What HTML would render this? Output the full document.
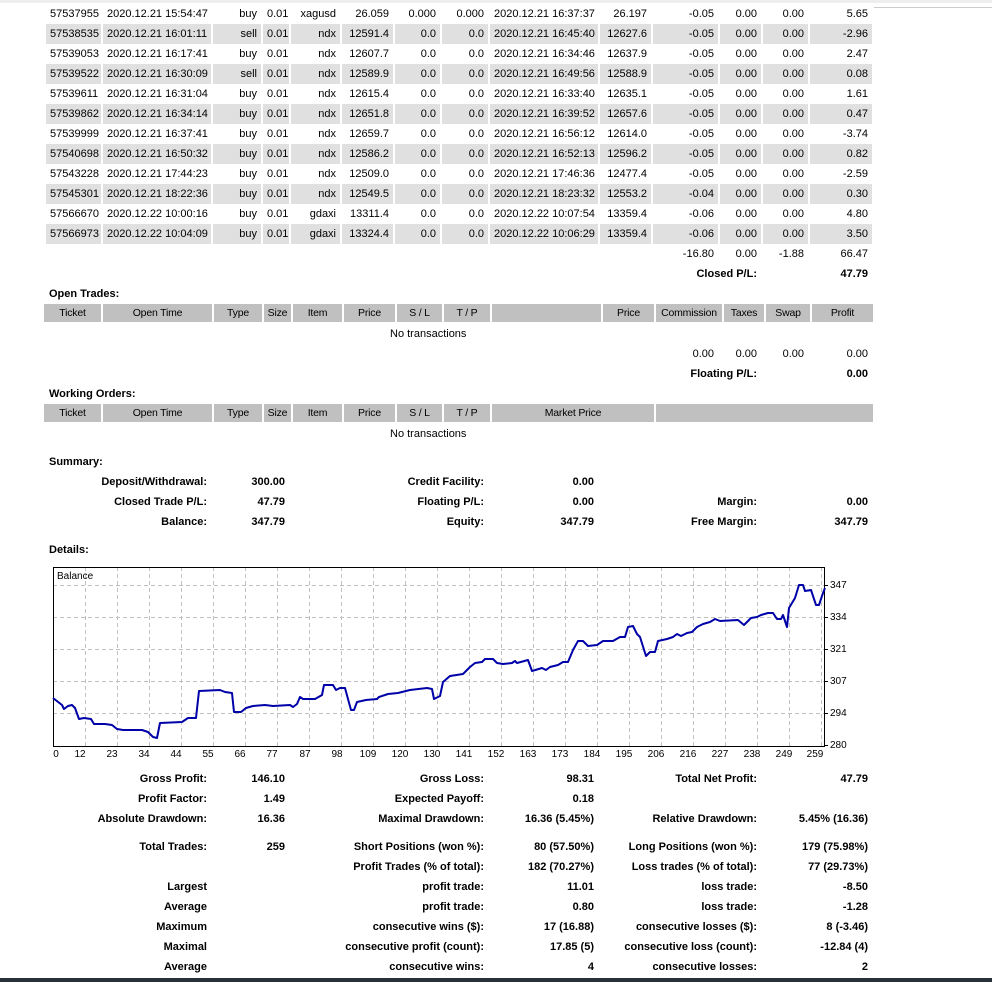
<!DOCTYPE html>
<html><head><meta charset="utf-8"><style>
*{margin:0;padding:0;box-sizing:border-box}
body{width:992px;height:982px;background:#fff;position:relative;overflow:hidden;font-family:"Liberation Sans","DejaVu Sans",sans-serif;font-size:11px;color:#000}
.a{position:absolute;line-height:14px;white-space:nowrap}
.b{font-weight:bold}
table{position:absolute;border-collapse:collapse;table-layout:fixed}
td{height:20px;line-height:20px;padding:0 4px;white-space:nowrap;overflow:hidden;text-align:right;border-right:2px solid #fff}
tr.g td{background:#e0e0e0}
td.l{text-align:left}
.h td{background:#c0c0c0;text-align:center;height:18px;line-height:18px;border-right:2px solid #fff;padding:0;font-size:10.5px;letter-spacing:-0.2px}
</style></head><body>
<div style="position:absolute;left:0;top:0;width:992px;height:3px;background:#eee"></div>
<div style="position:absolute;left:872px;top:7px;width:120px;height:1px;background:#ccc"></div>

<table style="left:46px;top:4px;width:827px">
<colgroup><col style="width:56px"><col style="width:110px"><col style="width:50px"><col style="width:28px"><col style="width:51px"><col style="width:53px"><col style="width:47px"><col style="width:48px"><col style="width:110px"><col style="width:53px"><col style="width:67px"><col style="width:43px"><col style="width:47px"><col style="width:64px"></colgroup>
<tr><td class="l">57537955</td><td class="l">2020.12.21 15:54:47</td><td>buy</td><td class="l">0.01</td><td>xagusd</td><td>26.059</td><td>0.000</td><td>0.000</td><td class="l">2020.12.21 16:37:37</td><td>26.197</td><td>-0.05</td><td>0.00</td><td>0.00</td><td>5.65</td></tr>
<tr class="g"><td class="l">57538535</td><td class="l">2020.12.21 16:01:11</td><td>sell</td><td class="l">0.01</td><td>ndx</td><td>12591.4</td><td>0.0</td><td>0.0</td><td class="l">2020.12.21 16:45:40</td><td>12627.6</td><td>-0.05</td><td>0.00</td><td>0.00</td><td>-2.96</td></tr>
<tr><td class="l">57539053</td><td class="l">2020.12.21 16:17:41</td><td>buy</td><td class="l">0.01</td><td>ndx</td><td>12607.7</td><td>0.0</td><td>0.0</td><td class="l">2020.12.21 16:34:46</td><td>12637.9</td><td>-0.05</td><td>0.00</td><td>0.00</td><td>2.47</td></tr>
<tr class="g"><td class="l">57539522</td><td class="l">2020.12.21 16:30:09</td><td>sell</td><td class="l">0.01</td><td>ndx</td><td>12589.9</td><td>0.0</td><td>0.0</td><td class="l">2020.12.21 16:49:56</td><td>12588.9</td><td>-0.05</td><td>0.00</td><td>0.00</td><td>0.08</td></tr>
<tr><td class="l">57539611</td><td class="l">2020.12.21 16:31:04</td><td>buy</td><td class="l">0.01</td><td>ndx</td><td>12615.4</td><td>0.0</td><td>0.0</td><td class="l">2020.12.21 16:33:40</td><td>12635.1</td><td>-0.05</td><td>0.00</td><td>0.00</td><td>1.61</td></tr>
<tr class="g"><td class="l">57539862</td><td class="l">2020.12.21 16:34:14</td><td>buy</td><td class="l">0.01</td><td>ndx</td><td>12651.8</td><td>0.0</td><td>0.0</td><td class="l">2020.12.21 16:39:52</td><td>12657.6</td><td>-0.05</td><td>0.00</td><td>0.00</td><td>0.47</td></tr>
<tr><td class="l">57539999</td><td class="l">2020.12.21 16:37:41</td><td>buy</td><td class="l">0.01</td><td>ndx</td><td>12659.7</td><td>0.0</td><td>0.0</td><td class="l">2020.12.21 16:56:12</td><td>12614.0</td><td>-0.05</td><td>0.00</td><td>0.00</td><td>-3.74</td></tr>
<tr class="g"><td class="l">57540698</td><td class="l">2020.12.21 16:50:32</td><td>buy</td><td class="l">0.01</td><td>ndx</td><td>12586.2</td><td>0.0</td><td>0.0</td><td class="l">2020.12.21 16:52:13</td><td>12596.2</td><td>-0.05</td><td>0.00</td><td>0.00</td><td>0.82</td></tr>
<tr><td class="l">57543228</td><td class="l">2020.12.21 17:44:23</td><td>buy</td><td class="l">0.01</td><td>ndx</td><td>12509.0</td><td>0.0</td><td>0.0</td><td class="l">2020.12.21 17:46:36</td><td>12477.4</td><td>-0.05</td><td>0.00</td><td>0.00</td><td>-2.59</td></tr>
<tr class="g"><td class="l">57545301</td><td class="l">2020.12.21 18:22:36</td><td>buy</td><td class="l">0.01</td><td>ndx</td><td>12549.5</td><td>0.0</td><td>0.0</td><td class="l">2020.12.21 18:23:32</td><td>12553.2</td><td>-0.04</td><td>0.00</td><td>0.00</td><td>0.30</td></tr>
<tr><td class="l">57566670</td><td class="l">2020.12.22 10:00:16</td><td>buy</td><td class="l">0.01</td><td>gdaxi</td><td>13311.4</td><td>0.0</td><td>0.0</td><td class="l">2020.12.22 10:07:54</td><td>13359.4</td><td>-0.06</td><td>0.00</td><td>0.00</td><td>4.80</td></tr>
<tr class="g"><td class="l">57566973</td><td class="l">2020.12.22 10:04:09</td><td>buy</td><td class="l">0.01</td><td>gdaxi</td><td>13324.4</td><td>0.0</td><td>0.0</td><td class="l">2020.12.22 10:06:29</td><td>13359.4</td><td>-0.06</td><td>0.00</td><td>0.00</td><td>3.50</td></tr>
</table>

<div class="a" style="top:247px;right:278px">-16.80</div>
<div class="a" style="top:247px;right:235px">0.00</div>
<div class="a" style="top:247px;right:188px">-1.88</div>
<div class="a" style="top:247px;right:124px">66.47</div>
<div class="a b" style="top:267px;right:235px">Closed P/L:</div>
<div class="a b" style="top:267px;right:124px">47.79</div>

<div class="a b" style="top:287px;left:49px">Open Trades:</div>
<table class="h" style="left:44px;top:304px;width:830px">
<colgroup><col style="width:58px"><col style="width:111px"><col style="width:50px"><col style="width:29px"><col style="width:51px"><col style="width:53px"><col style="width:47px"><col style="width:48px"><col style="width:111px"><col style="width:53px"><col style="width:68px"><col style="width:42px"><col style="width:46px"><col style="width:63px"></colgroup>
<tr><td>Ticket</td><td>Open Time</td><td>Type</td><td>Size</td><td>Item</td><td>Price</td><td>S / L</td><td>T / P</td><td></td><td>Price</td><td>Commission</td><td>Taxes</td><td>Swap</td><td>Profit</td></tr>
</table>
<div class="a" style="top:327px;left:390px">No transactions</div>
<div class="a" style="top:347px;right:278px">0.00</div>
<div class="a" style="top:347px;right:235px">0.00</div>
<div class="a" style="top:347px;right:188px">0.00</div>
<div class="a" style="top:347px;right:124px">0.00</div>
<div class="a b" style="top:367px;right:235px">Floating P/L:</div>
<div class="a b" style="top:367px;right:124px">0.00</div>

<div class="a b" style="top:387px;left:49px">Working Orders:</div>
<table class="h" style="left:44px;top:404px;width:830px">
<colgroup><col style="width:58px"><col style="width:111px"><col style="width:50px"><col style="width:29px"><col style="width:51px"><col style="width:53px"><col style="width:47px"><col style="width:48px"><col style="width:164px"><col style="width:219px"></colgroup>
<tr><td>Ticket</td><td>Open Time</td><td>Type</td><td>Size</td><td>Item</td><td>Price</td><td>S / L</td><td>T / P</td><td>Market Price</td><td></td></tr>
</table>
<div class="a" style="top:427px;left:390px">No transactions</div>

<div class="a b" style="top:455px;left:49px">Summary:</div>
<div class="a b" style="top:475px;right:785px">Deposit/Withdrawal:</div><div class="a b" style="top:475px;right:707px">300.00</div>
<div class="a b" style="top:475px;right:508px">Credit Facility:</div><div class="a b" style="top:475px;right:398px">0.00</div>
<div class="a b" style="top:495px;right:785px">Closed Trade P/L:</div><div class="a b" style="top:495px;right:707px">47.79</div>
<div class="a b" style="top:495px;right:508px">Floating P/L:</div><div class="a b" style="top:495px;right:398px">0.00</div>
<div class="a b" style="top:495px;right:235px">Margin:</div><div class="a b" style="top:495px;right:124px">0.00</div>
<div class="a b" style="top:515px;right:785px">Balance:</div><div class="a b" style="top:515px;right:707px">347.79</div>
<div class="a b" style="top:515px;right:508px">Equity:</div><div class="a b" style="top:515px;right:398px">347.79</div>
<div class="a b" style="top:515px;right:235px">Free Margin:</div><div class="a b" style="top:515px;right:124px">347.79</div>

<div class="a b" style="top:543px;left:49px">Details:</div>
<svg style="position:absolute;left:0;top:0" width="992" height="982">
<g stroke="#c0c0c0" stroke-dasharray="4,3" stroke-width="1">
<line x1="53" y1="585.5" x2="824" y2="585.5"/><line x1="53" y1="617.5" x2="824" y2="617.5"/><line x1="53" y1="649.5" x2="824" y2="649.5"/><line x1="53" y1="681.5" x2="824" y2="681.5"/><line x1="53" y1="713.5" x2="824" y2="713.5"/>
<line x1="85.5" y1="567" x2="85.5" y2="746"/><line x1="117.5" y1="567" x2="117.5" y2="746"/><line x1="149.5" y1="567" x2="149.5" y2="746"/><line x1="181.5" y1="567" x2="181.5" y2="746"/><line x1="213.5" y1="567" x2="213.5" y2="746"/><line x1="245.5" y1="567" x2="245.5" y2="746"/><line x1="277.5" y1="567" x2="277.5" y2="746"/><line x1="309.5" y1="567" x2="309.5" y2="746"/><line x1="341.5" y1="567" x2="341.5" y2="746"/><line x1="373.5" y1="567" x2="373.5" y2="746"/><line x1="405.5" y1="567" x2="405.5" y2="746"/><line x1="437.5" y1="567" x2="437.5" y2="746"/><line x1="469.5" y1="567" x2="469.5" y2="746"/><line x1="501.5" y1="567" x2="501.5" y2="746"/><line x1="533.5" y1="567" x2="533.5" y2="746"/><line x1="565.5" y1="567" x2="565.5" y2="746"/><line x1="597.5" y1="567" x2="597.5" y2="746"/><line x1="629.5" y1="567" x2="629.5" y2="746"/><line x1="661.5" y1="567" x2="661.5" y2="746"/><line x1="693.5" y1="567" x2="693.5" y2="746"/><line x1="725.5" y1="567" x2="725.5" y2="746"/><line x1="757.5" y1="567" x2="757.5" y2="746"/><line x1="789.5" y1="567" x2="789.5" y2="746"/><line x1="821.5" y1="567" x2="821.5" y2="746"/>
</g>
<rect x="53.5" y="567.5" width="771" height="179" fill="none" stroke="#000" stroke-width="1"/>
<polyline fill="none" stroke="#0000a8" stroke-width="2" stroke-linejoin="round" points="53,698 62,705 64,709 68,706 72,705 75,708 79,719 84,718 91,719 94,724 105,724 112,725 117,729 123,730 142,730 148,732 153,737 157,738 160,723 182,722 188,718 196,718 199,691 220,690 225,692 232,693 234,712 241,712 246,708 253,706 265,705 273,706 290,705 293,707 297,704 300,697 303,699 315,699 322,695 324,685 333,685 336,690 340,688 345,688 351,710 354,710 357,702 366,700 377,699 379,697 388,694 398,693 410,690 427,688 432,689 434,699 440,696 443,682 450,676 463,674 470,667 475,663 482,662 485,659 493,659 497,663 503,664 512,663 515,661 517,663 528,660 532,671 542,668 546,670 550,667 558,665 563,662 568,662 573,650 578,641 583,641 588,646 597,645 603,641 613,641 620,637 625,637 628,627 633,626 637,634 640,637 646,656 650,652 655,652 658,641 667,639 673,637 677,634 681,636 687,633 692,632 697,627 703,624 710,622 715,619 720,621 738,620 744,625 751,618 757,617 761,615 768,613 773,613 777,619 781,619 783,615 787,627 789,608 795,598 799,585 803,585 805,591 811,590 816,605 819,605 823,593 825,588"/>
<g stroke="#000"><line x1="824" y1="585.5" x2="828" y2="585.5"/><line x1="824" y1="617.5" x2="828" y2="617.5"/><line x1="824" y1="649.5" x2="828" y2="649.5"/><line x1="824" y1="681.5" x2="828" y2="681.5"/><line x1="824" y1="713.5" x2="828" y2="713.5"/><line x1="824" y1="745.5" x2="828" y2="745.5"/></g>
<g font-family="Liberation Sans, sans-serif" font-size="10" fill="#000">
<text x="57" y="579">Balance</text>
<text x="830" y="588">347</text><text x="830" y="620">334</text><text x="830" y="652">321</text><text x="830" y="684">307</text><text x="830" y="716">294</text><text x="830" y="748">280</text>
<g text-anchor="middle"><text x="56" y="757">0</text><text x="80" y="757">12</text><text x="112" y="757">23</text><text x="144" y="757">34</text><text x="176" y="757">44</text><text x="208" y="757">55</text><text x="240" y="757">66</text><text x="272" y="757">77</text><text x="305" y="757">87</text><text x="337" y="757">98</text><text x="368" y="757">109</text><text x="400" y="757">120</text><text x="432" y="757">130</text><text x="464" y="757">141</text><text x="496" y="757">152</text><text x="528" y="757">163</text><text x="560" y="757">173</text><text x="592" y="757">184</text><text x="624" y="757">195</text><text x="656" y="757">206</text><text x="688" y="757">216</text><text x="720" y="757">227</text><text x="752" y="757">238</text><text x="784" y="757">249</text><text x="815" y="757">259</text></g>
</g>
</svg>

<div class="a b" style="top:772px;right:785px">Gross Profit:</div><div class="a b" style="top:772px;right:707px">146.10</div>
<div class="a b" style="top:772px;right:508px">Gross Loss:</div><div class="a b" style="top:772px;right:398px">98.31</div>
<div class="a b" style="top:772px;right:235px">Total Net Profit:</div><div class="a b" style="top:772px;right:124px">47.79</div>
<div class="a b" style="top:792px;right:785px">Profit Factor:</div><div class="a b" style="top:792px;right:707px">1.49</div>
<div class="a b" style="top:792px;right:508px">Expected Payoff:</div><div class="a b" style="top:792px;right:398px">0.18</div>
<div class="a b" style="top:812px;right:785px">Absolute Drawdown:</div><div class="a b" style="top:812px;right:707px">16.36</div>
<div class="a b" style="top:812px;right:508px">Maximal Drawdown:</div><div class="a b" style="top:812px;right:398px">16.36 (5.45%)</div>
<div class="a b" style="top:812px;right:235px">Relative Drawdown:</div><div class="a b" style="top:812px;right:124px">5.45% (16.36)</div>

<div class="a b" style="top:840px;right:785px">Total Trades:</div><div class="a b" style="top:840px;right:707px">259</div>
<div class="a b" style="top:840px;right:508px">Short Positions (won %):</div><div class="a b" style="top:840px;right:398px">80 (57.50%)</div>
<div class="a b" style="top:840px;right:235px">Long Positions (won %):</div><div class="a b" style="top:840px;right:124px">179 (75.98%)</div>
<div class="a b" style="top:860px;right:508px">Profit Trades (% of total):</div><div class="a b" style="top:860px;right:398px">182 (70.27%)</div>
<div class="a b" style="top:860px;right:235px">Loss trades (% of total):</div><div class="a b" style="top:860px;right:124px">77 (29.73%)</div>
<div class="a b" style="top:880px;right:785px">Largest</div>
<div class="a b" style="top:880px;right:508px">profit trade:</div><div class="a b" style="top:880px;right:398px">11.01</div>
<div class="a b" style="top:880px;right:235px">loss trade:</div><div class="a b" style="top:880px;right:124px">-8.50</div>
<div class="a b" style="top:900px;right:785px">Average</div>
<div class="a b" style="top:900px;right:508px">profit trade:</div><div class="a b" style="top:900px;right:398px">0.80</div>
<div class="a b" style="top:900px;right:235px">loss trade:</div><div class="a b" style="top:900px;right:124px">-1.28</div>
<div class="a b" style="top:920px;right:785px">Maximum</div>
<div class="a b" style="top:920px;right:508px">consecutive wins ($):</div><div class="a b" style="top:920px;right:398px">17 (16.88)</div>
<div class="a b" style="top:920px;right:235px">consecutive losses ($):</div><div class="a b" style="top:920px;right:124px">8 (-3.46)</div>
<div class="a b" style="top:940px;right:785px">Maximal</div>
<div class="a b" style="top:940px;right:508px">consecutive profit (count):</div><div class="a b" style="top:940px;right:398px">17.85 (5)</div>
<div class="a b" style="top:940px;right:235px">consecutive loss (count):</div><div class="a b" style="top:940px;right:124px">-12.84 (4)</div>
<div class="a b" style="top:960px;right:785px">Average</div>
<div class="a b" style="top:960px;right:508px">consecutive wins:</div><div class="a b" style="top:960px;right:398px">4</div>
<div class="a b" style="top:960px;right:235px">consecutive losses:</div><div class="a b" style="top:960px;right:124px">2</div>

<div style="position:absolute;left:0;top:978px;width:992px;height:4px;background:#263238"></div>
</body></html>
